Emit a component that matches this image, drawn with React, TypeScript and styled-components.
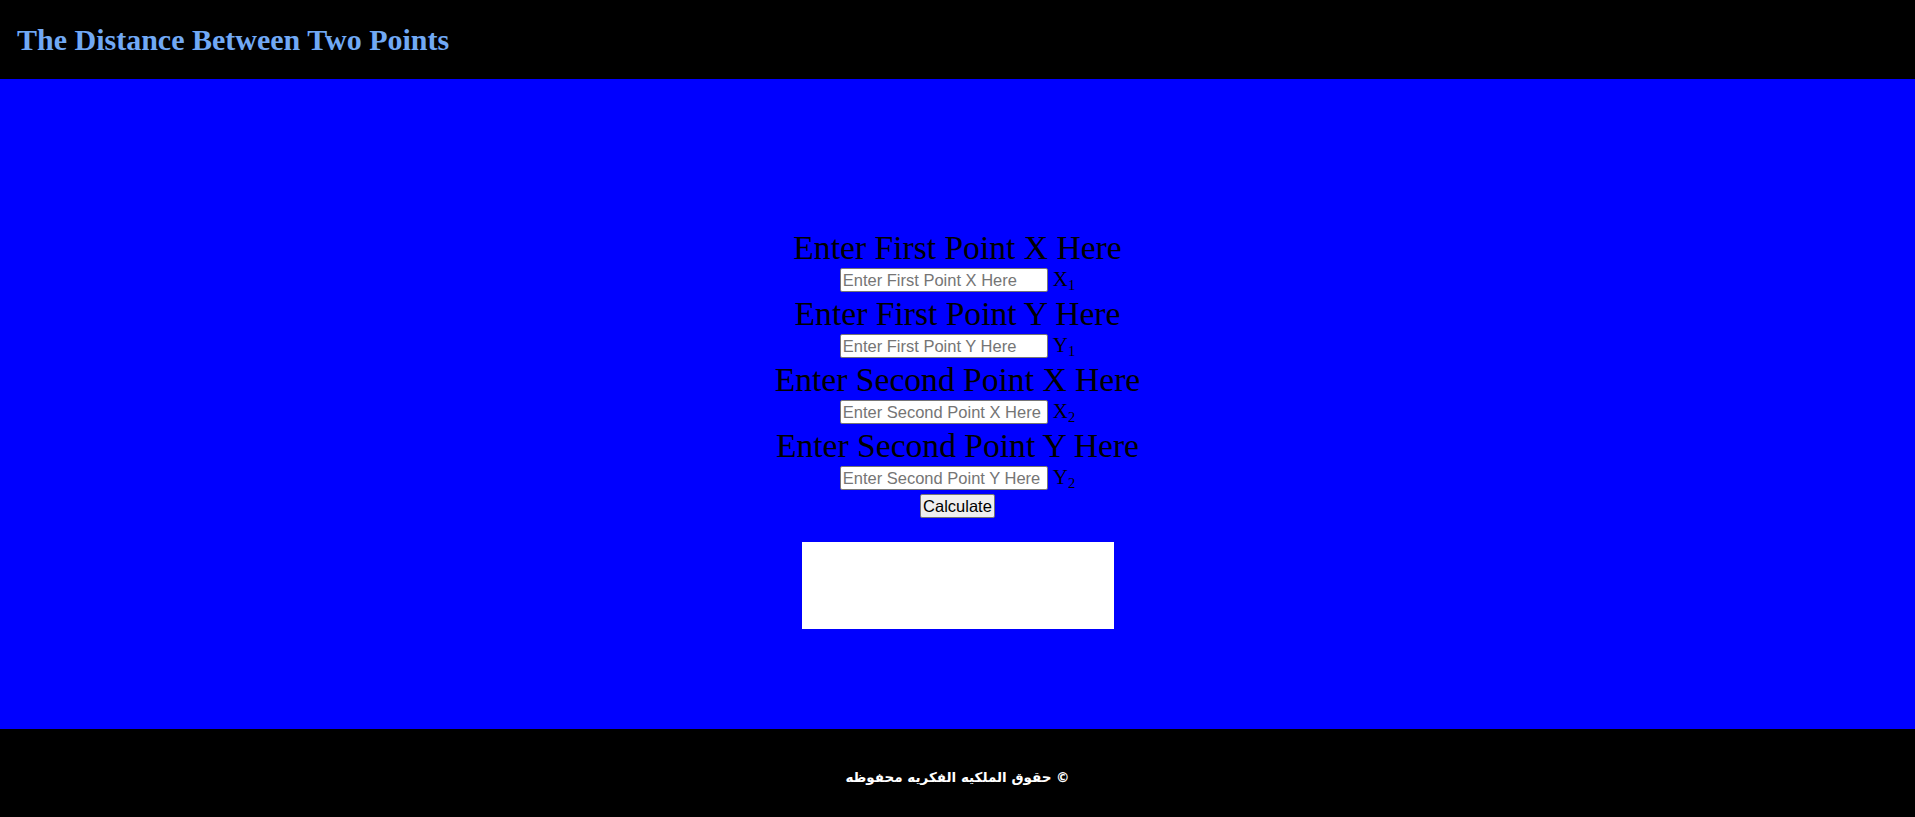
import React from "react";
import styled, { createGlobalStyle } from "styled-components";

const GlobalStyle = createGlobalStyle`
  html, body {
    margin: 0;
    padding: 0;
    background: #0000ff;
  }
  body {
    font-family: "Liberation Serif", "Times New Roman", serif;
  }
`;

const Header = styled.header`
  height: 79px;
  background: #000;
  display: flex;
  align-items: center;
  padding-left: 17px;
`;

const Title = styled.h1`
  margin: 0;
  font-family: "Liberation Serif", "Times New Roman", serif;
  font-weight: bold;
  font-size: 30px;
  color: #71a9f5;
  line-height: 1;
`;

const Main = styled.main`
  height: 650px;
  box-sizing: border-box;
  background: #0000ff;
  padding-top: 150px;
  display: flex;
  flex-direction: column;
  align-items: center;
`;

const FieldLabel = styled.label`
  display: block;
  font-family: "Liberation Serif", "Times New Roman", serif;
  font-size: 33.6px;
  line-height: 37px;
  color: #000;
  text-align: center;
  white-space: nowrap;
`;

const InputRow = styled.div`
  height: 29px;
  box-sizing: border-box;
  padding-top: 2px;
  display: flex;
  align-items: baseline;
  justify-content: center;
  gap: 5px;
`;

const PointInput = styled.input`
  width: 208px;
  height: 24px;
  box-sizing: border-box;
  padding: 1px 2px;
  border: 1px solid #767676;
  border-radius: 2px;
  background: #fff;
  font-family: "Liberation Sans", Arial, sans-serif;
  font-size: 16.5px;
  color: #000;
  &::placeholder {
    color: #757575;
  }
`;

const Coord = styled.span`
  font-family: "Liberation Serif", "Times New Roman", serif;
  font-size: 21px;
  line-height: 1;
  color: #000;
`;

const Sub = styled.sub`
  font-size: 0.7em;
  line-height: 0;
  vertical-align: -4px;
`;

const CalcButton = styled.button`
  margin-top: 1px;
  height: 24px;
  box-sizing: border-box;
  padding: 1px 2px;
  border: 1px solid #767676;
  border-radius: 2px;
  background: #efefef;
  font-family: "Liberation Sans", Arial, sans-serif;
  font-size: 16.5px;
  color: #000;
  line-height: 1;
`;

const ResultBox = styled.div`
  margin-top: 24px;
  width: 312px;
  height: 87px;
  background: #fff;
`;

const Footer = styled.footer`
  height: 88px;
  box-sizing: border-box;
  background: #000;
  display: flex;
  justify-content: center;
  padding-top: 39px;
`;

const FooterText = styled.p`
  margin: 0;
  font-family: "DejaVu Sans", "Liberation Sans", Arial, sans-serif;
  font-weight: bold;
  font-size: 13.5px;
  line-height: 18px;
  color: #fff;
`;

const fields = [
  { label: "Enter First Point X Here", letter: "X", idx: "1" },
  { label: "Enter First Point Y Here", letter: "Y", idx: "1" },
  { label: "Enter Second Point X Here", letter: "X", idx: "2" },
  { label: "Enter Second Point Y Here", letter: "Y", idx: "2" },
];

export default function App() {
  return (
    <>
      <GlobalStyle />
      <Header>
        <Title>The Distance Between Two Points</Title>
      </Header>
      <Main>
        {fields.map((f, i) => (
          <React.Fragment key={i}>
            <FieldLabel htmlFor={`f${i}`}>{f.label}</FieldLabel>
            <InputRow>
              <PointInput id={`f${i}`} type="text" placeholder={f.label} />
              <Coord>
                {f.letter}
                <Sub>{f.idx}</Sub>
              </Coord>
            </InputRow>
          </React.Fragment>
        ))}
        <CalcButton type="button">Calculate</CalcButton>
        <ResultBox />
      </Main>
      <Footer>
        <FooterText dir="rtl">© حقوق الملكيه الفكريه محفوظه</FooterText>
      </Footer>
    </>
  );
}
